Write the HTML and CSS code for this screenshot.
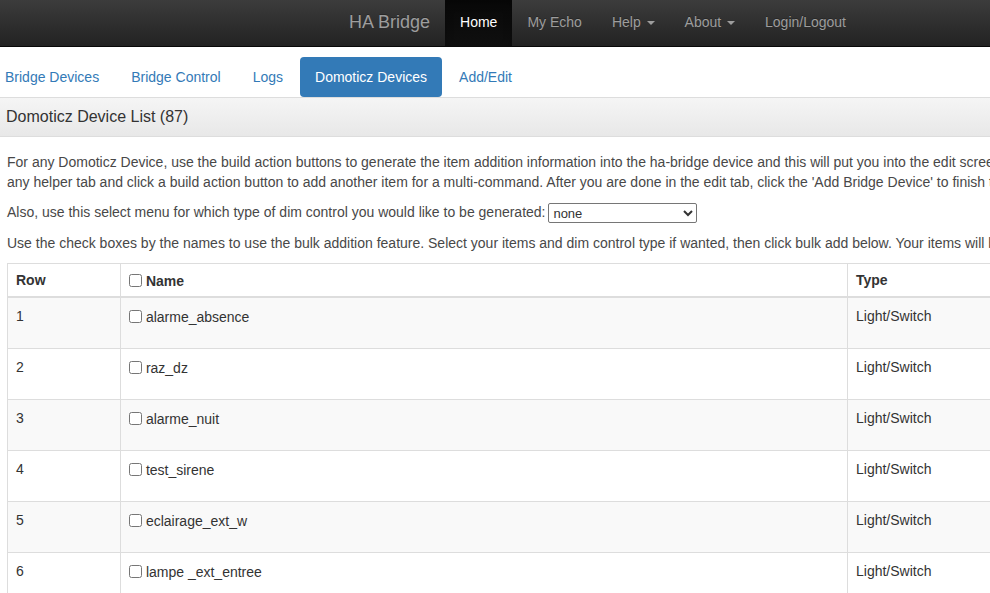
FILE: index.html
```html
<!DOCTYPE html>
<html lang="en">
<head>
<meta charset="utf-8">
<title>HA Bridge</title>
<link rel="stylesheet" href="styles.css">
</head>
<body>
<nav class="navbar">
  <span class="brand">HA Bridge</span>
  <ul class="nav-main">
    <li class="active"><a>Home</a></li>
    <li><a>My Echo</a></li>
    <li><a>Help <span class="caret"></span></a></li>
    <li><a>About <span class="caret"></span></a></li>
    <li><a>Login/Logout</a></li>
  </ul>
</nav>

<div class="page">
  <ul class="tabs">
    <li><a>Bridge Devices</a></li>
    <li><a>Bridge Control</a></li>
    <li><a>Logs</a></li>
    <li class="active"><a>Domoticz Devices</a></li>
    <li><a>Add/Edit</a></li>
  </ul>

  <div class="panel">
    <div class="panel-heading">Domoticz Device List (87)</div>
    <div class="panel-body">
      <p>For any Domoticz Device, use the build action buttons to generate the item addition information into the ha-bridge device and this will put you into the edit screen. Then you can modify the name to anything you want that will be the keyword for the Echo or Google Home. Also, you can go back to<br>any helper tab and click a build action button to add another item for a multi-command. After you are done in the edit tab, click the 'Add Bridge Device' to finish that selection setup. The 'Already Configured Domoticz Devices' list below will show what is already setup for your Domoticz.</p>
      <p>Also, use this select menu for which type of dim control you would like to be generated: <select class="dim"><option>none</option><option>${intensity.byte}</option><option>${intensity.percent}</option><option>${intensity.math(X*1)}</option></select></p>
      <p>Use the check boxes by the names to use the bulk addition feature. Select your items and dim control type if wanted, then click bulk add below. Your items will be added with on and off or dim and off if selected.</p>

      <table class="devices">
        <colgroup>
          <col class="c-row">
          <col class="c-name">
          <col class="c-type">
          <col class="c-cat">
          <col class="c-act">
        </colgroup>
        <thead>
          <tr>
            <th>Row</th>
            <th><input type="checkbox"> Name</th>
            <th>Type</th>
            <th>Category</th>
            <th>Actions</th>
          </tr>
        </thead>
        <tbody>
          <tr><td>1</td><td><input type="checkbox"> alarme_absence</td><td>Light/Switch</td><td></td><td></td></tr>
          <tr><td>2</td><td><input type="checkbox"> raz_dz</td><td>Light/Switch</td><td></td><td></td></tr>
          <tr><td>3</td><td><input type="checkbox"> alarme_nuit</td><td>Light/Switch</td><td></td><td></td></tr>
          <tr><td>4</td><td><input type="checkbox"> test_sirene</td><td>Light/Switch</td><td></td><td></td></tr>
          <tr><td>5</td><td><input type="checkbox"> eclairage_ext_w</td><td>Light/Switch</td><td></td><td></td></tr>
          <tr><td>6</td><td><input type="checkbox"> lampe _ext_entree</td><td>Light/Switch</td><td></td><td></td></tr>
          <tr><td>7</td><td><input type="checkbox"> lampe_salon</td><td>Light/Switch</td><td></td><td></td></tr>
        </tbody>
      </table>
    </div>
  </div>
</div>
</body>
</html>
```

FILE: styles.css
```css
* { box-sizing: border-box; }

html, body {
  margin: 0;
  overflow: hidden;
}

body {
  font-family: "Liberation Sans", Arial, sans-serif;
  font-size: 14px;
  line-height: 20px;
  color: #333;
  background: #fff;
}

/* ---------- top navbar ---------- */
.navbar {
  display: flex;
  align-items: stretch;
  height: 47px;
  padding-left: 334px;
  background: linear-gradient(to bottom, #3c3c3c 0, #222 100%);
  border-bottom: 1px solid #080808;
}

.brand {
  padding: 11px 15px 0;
  font-size: 18px;
  line-height: 22px;
  color: #9d9d9d;
  text-shadow: 0 -1px 0 rgba(0,0,0,.25);
}

.nav-main {
  display: flex;
  margin: 0;
  padding: 0;
  list-style: none;
}

.nav-main a {
  display: block;
  height: 100%;
  padding: 12px 15px 0;
  color: #9d9d9d;
  text-shadow: 0 -1px 0 rgba(0,0,0,.25);
}

.nav-main .active a {
  color: #fff;
  background: linear-gradient(to bottom, #080808 0, #0f0f0f 100%);
  box-shadow: inset 0 3px 9px rgba(0,0,0,.25);
}

.caret {
  display: inline-block;
  width: 0;
  height: 0;
  margin-left: 2px;
  vertical-align: middle;
  border-top: 4px solid;
  border-right: 4px solid transparent;
  border-left: 4px solid transparent;
}

/* ---------- tabs ---------- */
.page {
  width: 1600px;
}

.tabs {
  display: flex;
  margin: 10px 0 0 -10px;
  padding: 0;
  list-style: none;
}

.tabs li + li { margin-left: 2px; }

.tabs a {
  display: block;
  padding: 10px 15px;
  color: #337ab7;
  border-radius: 4px;
}

.tabs .active a {
  color: #fff;
  background: #337ab7;
}

/* ---------- panel ---------- */
.panel {
  border-top: 1px solid #ddd;
}

.panel-heading {
  padding: 10px 6px;
  font-size: 16px;
  line-height: 18px;
  color: #333;
  background: linear-gradient(to bottom, #f5f5f5 0, #e8e8e8 100%);
  border-bottom: 1px solid #ddd;
}

.panel-body {
  padding: 15px 7px;
}

.panel-body p {
  margin: 0 0 10px;
  white-space: nowrap;
  color: #484848;
}

.dim {
  width: 149px;
  height: 20px;
  margin-left: -1px;
  font-family: "Liberation Sans", Arial, sans-serif;
  font-size: 13px;
  color: #333;
  vertical-align: middle;
  border: 1px solid #767676;
  border-radius: 2px;
  background: #fff;
}

/* ---------- table ---------- */
.devices {
  width: 1500px;
  border-collapse: collapse;
  border: 1px solid #ddd;
}

.c-row { width: 113px; }
.c-name { width: 727px; }
.c-type { width: 200px; }
.c-cat { width: 200px; }

.devices th,
.devices td {
  text-align: left;
  vertical-align: top;
  border: 1px solid #ddd;
  padding: 8px;
}

.devices th {
  padding: 6px 8px 5px;
  height: 33px;
  font-weight: bold;
  border-bottom-width: 2px;
}

.devices td {
  height: 51px;
}

.devices tbody tr:nth-child(odd) td {
  background: #f9f9f9;
}

.devices input[type="checkbox"] {
  width: 13px;
  height: 13px;
  margin: 4px 0 0;
  vertical-align: -1px;
}
```
